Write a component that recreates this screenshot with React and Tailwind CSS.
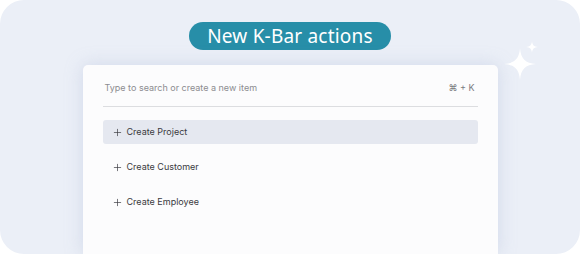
import { Plus } from 'lucide-react';

const actions = ['Create Project', 'Create Customer', 'Create Employee'];

function Sparkle({ className }) {
  return (
    <svg viewBox="0 0 24 24" className={className} fill="currentColor">
      <path d="M12 0 C12.6 8 16 11.4 24 12 C16 12.6 12.6 16 12 24 C11.4 16 8 12.6 0 12 C8 11.4 11.4 8 12 0 Z" />
    </svg>
  );
}

function App() {
  return (
    <div className="h-[254px] w-[580px] bg-white font-['Inter',sans-serif]">
      <div className="relative flex h-full w-full flex-col items-center overflow-hidden rounded-[24px] bg-[#ebeff7]">
        <div className="mt-[22px] flex h-[28px] items-center rounded-full bg-[#278ea8] px-[18px] font-['Noto_Sans',sans-serif] text-[19px] font-normal tracking-[0.2px] text-white">
          New K-Bar actions
        </div>

        <Sparkle className="absolute left-[504px] top-[48px] h-[32px] w-[32px] text-white" />
        <Sparkle className="absolute left-[526px] top-[41px] h-[12px] w-[12px] text-white" />

        <div className="mt-[15px] w-[415px] flex-1 rounded-t-[5px] bg-[#fcfcfd] px-[20px] shadow-[0_0_18px_rgba(160,175,210,0.35)]">
          <div className="flex h-[42px] items-center justify-between border-b border-[#dcdde0] pl-[2px] pr-[3px] pt-[5px]">
            <span className="text-[9px] text-[#8c8c90]">Type to search or create a new item</span>
            <span className="text-[9px] text-[#7a7a80]">⌘ + K</span>
          </div>
          <div className="mt-[13px] flex flex-col gap-[11px]">
            {actions.map((label, i) => (
              <div
                key={label}
                className={`flex h-[24px] items-center gap-[4px] rounded-[3px] px-[9px] text-[9px] text-[#3a3a40] ${
                  i === 0 ? 'bg-[#e5e8f0]' : ''
                }`}
              >
                <Plus size={11} strokeWidth={1.5} />
                <span>{label}</span>
              </div>
            ))}
          </div>
        </div>
      </div>
    </div>
  );
}

export default App;
